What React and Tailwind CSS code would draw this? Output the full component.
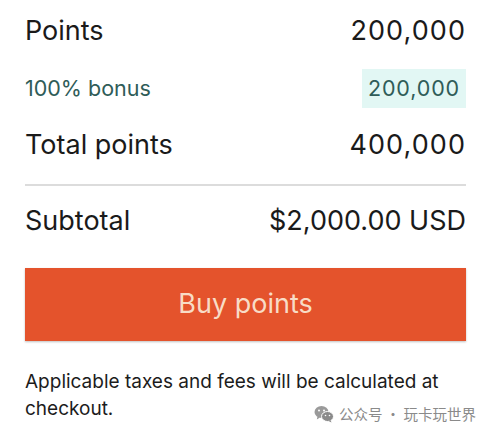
import React from 'react';

function WeChatIcon() {
  return (
    <svg width="20" height="18" viewBox="0 0 20 18" className="shrink-0">
      <ellipse cx="7.5" cy="7" rx="7" ry="6" fill="#9a9a9a" />
      <path d="M3.5 11.5 L2.8 14.5 L6 12.6 Z" fill="#9a9a9a" />
      <ellipse cx="13.5" cy="11.5" rx="6" ry="5" fill="#8a8a8a" stroke="#fff" strokeWidth="1" />
      <path d="M16.5 15 L17.5 17.5 L14.5 16 Z" fill="#8a8a8a" />
      <circle cx="5" cy="5.5" r="1" fill="#fff" />
      <circle cx="10" cy="5.5" r="1" fill="#fff" />
      <circle cx="11.5" cy="10.5" r="0.8" fill="#fff" />
      <circle cx="15.5" cy="10.5" r="0.8" fill="#fff" />
    </svg>
  );
}

function Row({ label, value, className, valueClass = 'tracking-[0.04em]' }) {
  return (
    <div className={`flex items-center justify-between ${className}`}>
      <span>{label}</span>
      <span className={valueClass}>{value}</span>
    </div>
  );
}

export default function App() {
  return (
    <div className="relative w-[492px] h-[438px] bg-white overflow-hidden font-['Inter','Noto_Sans',sans-serif] text-[#1a1a1a]">
      <div className="pl-[25px] pr-[26px]">
        <Row label="Points" value="200,000" className="h-[62px] text-[27px]" />

        <div className="flex items-center justify-between h-[52px] text-[21.5px] text-[#2f5c58]">
          <span>100% bonus</span>
          <span className="bg-[#e2f7f4] h-[39px] px-[6px] flex items-center tracking-[0.04em]">200,000</span>
        </div>

        <Row label="Total points" value="400,000" className="h-[63px] text-[27px]" />

        <div className="mt-[7px] h-[2px] bg-[#dcdcdc]" />

        <Row label="Subtotal" value="$2,000.00 USD" valueClass="" className="h-[70px] text-[27px]" />

        <button className="mt-[12px] w-full h-[73px] bg-[#e4532c] text-[#f8dcc6] text-[27px] flex items-center justify-center shadow-[0_1px_2px_rgba(0,0,0,0.25)]">
          Buy points
        </button>

        <p className="mt-[27px] text-[19px] leading-[27px] text-[#1c1c1c]">
          <span className="block w-fit">Applicable taxes and fees will be calculated at</span>
          <span className="block w-fit">checkout.</span>
        </p>
      </div>

      <div className="absolute left-[314px] top-[403px] flex items-center gap-[5px] text-[14.5px] text-[#8a8a8a] font-['Noto_Sans_CJK_SC',sans-serif]">
        <WeChatIcon />
        <span>公众号 · 玩卡玩世界</span>
      </div>
    </div>
  );
}
